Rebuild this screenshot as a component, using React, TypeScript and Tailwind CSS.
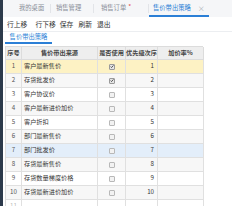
import React from "react";

const rows = [
  { n: 1, src: "客户最新售价", on: true, p: "1", hl: "y" },
  { n: 2, src: "存货批发价", on: true, p: "2" },
  { n: 3, src: "客户协议价", on: false, p: "3" },
  { n: 4, src: "客户最新进价加价", on: false, p: "4" },
  { n: 5, src: "客户折扣", on: false, p: "5" },
  { n: 6, src: "部门最新售价", on: false, p: "6" },
  { n: 7, src: "部门批发价", on: false, p: "7", hl: "b" },
  { n: 8, src: "存货最新售价", on: false, p: "8" },
  { n: 9, src: "存货数量梯度价格", on: false, p: "9" },
  { n: 10, src: "存货最新进价加价", on: false, p: "10" },
  { n: 11, src: "", on: null as boolean | null, p: "" },
];

function Box({ on }: { on: boolean }) {
  return (
    <div
      className={
        "w-[6px] h-[6px] rounded-[1px] border flex items-center justify-center " +
        (on ? "border-[#9a9a9a] bg-[#e6e6e6]" : "border-[#b8b8b8] bg-[#f2f2f2]")
      }
    >
      {on && (
        <svg width="5" height="5" viewBox="0 0 10 10">
          <path d="M1.5 5.2 L4 7.6 L8.6 2.2" stroke="#333" strokeWidth="2" fill="none" />
        </svg>
      )}
    </div>
  );
}

export default function App() {
  return (
    <div
      className="flex w-[232px] h-[206px] overflow-hidden bg-white text-[#333]"
      style={{ fontFamily: '"Noto Sans CJK SC", "Noto Sans", sans-serif' }}
    >
      <div className="w-[3px] shrink-0 bg-[#2c3a4b]" />
      <div className="flex-1 flex flex-col min-w-0">
        {/* tab bar */}
        <div className="h-[17px] shrink-0 flex items-stretch bg-[#f5f6f8] text-[6.3px] leading-none text-[#8a8f99]">
          <div className="w-[47px] flex items-center pl-[16px]">我的桌面</div>
          <div className="w-px my-[4px] bg-[#e2e4e8]" />
          <div className="w-[42px] flex items-center pl-[5px]">销售管理</div>
          <div className="w-px my-[4px] bg-[#e2e4e8]" />
          <div className="w-[54px] flex items-center pl-[7px]">
            销售订单<span className="text-[#e5484d] ml-[2px] -mt-[3px]">*</span>
          </div>
          <div className="w-px my-[4px] bg-[#e2e4e8]" />
          <div className="w-[60px] flex items-center pl-[4px] text-[#2b7fd6] border-b-[2px] border-[#2b7fd6] pt-[2px]">
            售价带出策略
            <span className="ml-[7px] text-[#a8adb5] text-[7px]">×</span>
          </div>
        </div>
        {/* toolbar */}
        <div className="h-[14px] shrink-0 flex items-center text-[6.8px] leading-none text-[#333] pl-[4px]">
          <span>行上移</span>
          <span className="ml-[8px]">行下移</span>
          <span className="ml-[4px]">保存</span>
          <span className="ml-[5px]">刷新</span>
          <span className="ml-[5px]">退出</span>
        </div>
        <div className="h-px bg-[#eceef1] shrink-0" />
        {/* sub tab */}
        <div className="h-[12px] shrink-0 flex items-end pl-[2px]">
          <div className="w-[47px] h-[11px] flex items-center justify-center text-[6.3px] leading-none text-[#2b7fd6] border-b-[2px] border-[#2b7fd6]">
            售价带出策略
          </div>
        </div>
        {/* table */}
        <div className="mt-[2px] ml-[2px] w-[198px] border-l border-t border-[#dcdcdc] text-[6.2px] leading-none">
          <div className="grid grid-cols-[16px_76px_28px_32px_46px] h-[13px] bg-[#eeeeee] font-bold text-[#444]">
            <div className="border-r border-b border-[#dcdcdc] flex items-center justify-center">序号</div>
            <div className="border-r border-b border-[#dcdcdc] flex items-center justify-center">售价带出来源</div>
            <div className="border-r border-b border-[#dcdcdc] flex items-center justify-center">是否使用</div>
            <div className="border-r border-b border-[#dcdcdc] flex items-center justify-center">优先级次序</div>
            <div className="border-r border-b border-[#dcdcdc] flex items-center justify-center">加价率%</div>
          </div>
          {rows.map((r, i) => {
            const bg =
              r.hl === "y"
                ? "bg-[#fdf2c4]"
                : r.hl === "b"
                ? "bg-[#e3eefa]"
                : i % 2 === 1
                ? "bg-[#f7f7f7]"
                : "bg-white";
            return (
              <div
                key={r.n}
                className={"grid grid-cols-[16px_76px_28px_32px_46px] h-[14px] " + bg}
              >
                <div
                  className={
                    "border-r border-b border-[#e0e0e0] flex items-center justify-center " +
                    (r.n === 11 ? "text-[#bbb]" : "text-[#555]")
                  }
                >
                  {r.n}
                </div>
                <div className="border-r border-b border-[#e0e0e0] flex items-center pl-[2px]">{r.src}</div>
                <div className="border-r border-b border-[#e0e0e0] flex items-center justify-center">
                  {r.on !== null && <Box on={r.on} />}
                </div>
                <div className="border-r border-b border-[#e0e0e0] flex items-center justify-end pr-[3px]">{r.p}</div>
                <div className="border-r border-b border-[#e0e0e0]" />
              </div>
            );
          })}
        </div>
      </div>
    </div>
  );
}
